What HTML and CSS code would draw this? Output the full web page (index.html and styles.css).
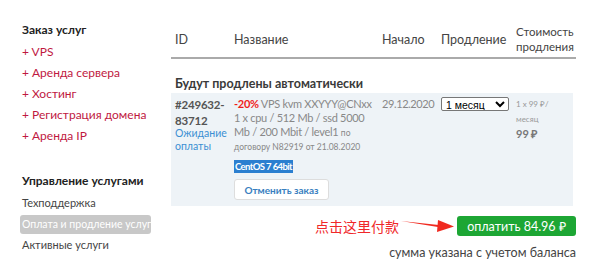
FILE: index.html
```html
<!DOCTYPE html>
<html lang="ru">
<head>
    <meta charset="UTF-8">
    <title>Оплата и продление услуг</title>
    <link rel="stylesheet" href="styles.css">
</head>
<body>
    <div class="page">
        <!-- Sidebar -->
        <aside class="sidebar">
            <h3>Заказ услуг</h3>
            <ul class="order-list">
                <li>+ VPS</li>
                <li>+ Аренда сервера</li>
                <li>+ Хостинг</li>
                <li>+ Регистрация домена</li>
                <li>+ Аренда IP</li>
            </ul>
            <h3 class="manage-title">Управление услугами</h3>
            <ul class="manage-list">
                <li>Техподдержка</li>
                <li class="active">Оплата и продление услуг</li>
                <li>Активные услуги</li>
            </ul>
        </aside>

        <!-- Main -->
        <main class="main">
            <div class="table-head">
                <div class="col-id">ID</div>
                <div class="col-name">Название</div>
                <div class="col-start">Начало</div>
                <div class="col-renew">Продление</div>
                <div class="col-cost">Стоимость продления</div>
            </div>

            <h4 class="group-title">Будут продлены автоматически</h4>

            <div class="table-row">
                <div class="col-id">
                    <div class="order-id">#249632-<br>83712</div>
                    <div class="order-status">Ожидание<br>оплаты</div>
                </div>
                <div class="col-name">
                    <div class="service">
                        <span class="line"><span class="discount">-20%</span> VPS kvm XXYYY@CNxx</span>
                        <span class="line">1 x cpu / 512 Mb / ssd 5000</span>
                        <span class="line">Mb / 200 Mbit / level1 <span class="contract">по</span></span>
                        <span class="line contract">договору N82919 от 21.08.2020</span>
                    </div>
                    <span class="os-badge">CentOS 7 64bit</span>
                    <button class="cancel-btn">Отменить заказ</button>
                </div>
                <div class="col-start date">29.12.2020</div>
                <div class="col-renew">
                    <select class="period">
                        <option>1 месяц</option>
                    </select>
                </div>
                <div class="col-cost">
                    <div class="per-month">1 x 99 ₽/<br>месяц</div>
                    <div class="total">99 ₽</div>
                </div>
            </div>

            <div class="pay-row">
                <span class="hint">点击这里付款</span>
                <svg class="arrow" width="53" height="14" viewBox="0 0 53 14">
                    <path d="M0 2 L40 6.2 L40 8.6 Z" fill="#f02a20"/>
                    <path d="M37 1 L53 7.5 L36 13 Z" fill="#f02a20"/>
                </svg>
                <button class="pay-btn">оплатить 84.96 ₽</button>
            </div>
            <div class="balance-note">сумма указана с учетом баланса</div>
        </main>
    </div>
</body>
</html>
```

FILE: styles.css
```css
body {
    margin: 0;
    font-family: Lato, "Open Sans", sans-serif;
    background: #fff;
    color: #333;
}
.page {
    display: flex;
    width: 600px;
}
.sidebar {
    width: 149px;
    padding: 22px 0 0 22px;
}
.sidebar h3 {
    margin: 0 0 3px;
    font-size: 12px;
    line-height: 16px;
    font-weight: 700;
    color: #222;
}
.sidebar ul {
    list-style: none;
    margin: 0;
    padding: 0;
}
.sidebar li {
    height: 21px;
    line-height: 21px;
}
.order-list li {
    font-size: 12px;
    color: #c0183f;
}
.manage-title {
    margin-top: 27px !important;
    margin-bottom: 3px !important;
}
.manage-list li {
    font-size: 11px;
    color: #444;
}
.manage-list li.active {
    height: 19px;
    line-height: 19px;
    margin: 2px 0 0 -2px;
    padding: 0 2px;
    width: 127px;
    background: #c8c8c8;
    color: #fff;
    border-radius: 3px;
    font-size: 10.5px;
    white-space: nowrap;
    overflow: hidden;
}
.main {
    width: 405px;
    padding-top: 24px;
}
.table-head,
.table-row {
    display: grid;
    grid-template-columns: 59px 148px 59px 75px 64px;
}
.table-head {
    align-items: center;
    font-size: 12.5px;
    color: #444;
    border-bottom: 2px solid #aaa;
    padding-bottom: 3px;
}
.table-head > div {
    padding-left: 4px;
}
.table-head .col-cost {
    font-size: 11.5px;
    line-height: 15px;
}
.group-title {
    margin: 17px 0 2px 4px;
    font-size: 12.5px;
    font-weight: 700;
    color: #3a3a3a;
    line-height: 15px;
}
.table-row {
    background: #eef3f7;
    width: 402px;
    padding: 4px 0 6px;
}
.table-row > div {
    padding-left: 4px;
}
.order-id {
    font-size: 11.5px;
    font-weight: 700;
    color: #555;
    line-height: 16px;
    letter-spacing: -0.2px;
}
.order-status {
    margin-top: -2px;
    font-size: 10.5px;
    line-height: 13px;
    color: #3b8fd3;
}
.service {
    font-size: 11px;
    color: #888;
    line-height: 14px;
    letter-spacing: -0.3px;
}
.service .line {
    display: block;
    white-space: nowrap;
}
.discount {
    color: #f01c1c;
    font-weight: 700;
}
.contract {
    font-size: 8.5px;
    letter-spacing: 0;
}
.os-badge {
    display: inline-block;
    margin-top: 4px;
    background: #2b7fd0;
    color: #fff;
    font-size: 9.5px;
    font-weight: 700;
    padding: 0 1px;
    line-height: 13px;
    letter-spacing: -0.6px;
}
.cancel-btn {
    display: block;
    margin-top: 6px;
    width: 95px;
    height: 21px;
    padding: 0;
    font-family: Lato, sans-serif;
    font-size: 10px;
    font-weight: 700;
    color: #3a7fc0;
    background: #fff;
    border: 1px solid #ddd;
    border-radius: 3px;
}
.date {
    font-size: 11px;
    color: #888;
    line-height: 14px;
    letter-spacing: -0.4px;
}
.period {
    display: block;
    width: 68px;
    height: 14px;
    font-size: 10.5px;
    font-family: "Liberation Sans", Arial, sans-serif;
    padding: 0;
    border: 1px solid #777;
    border-radius: 2px;
    background: #fff;
}
.per-month {
    font-size: 8px;
    color: #999;
    line-height: 15px;
}
.total {
    font-size: 11px;
    font-weight: 700;
    color: #777;
    line-height: 13px;
}
.pay-row {
    display: flex;
    align-items: center;
    justify-content: flex-end;
    margin-top: 10px;
    width: 405px;
}
.hint {
    font-family: "Noto Sans CJK SC", sans-serif;
    font-size: 14px;
    line-height: 18px;
    color: #f0282a;
    margin-right: 2px;
}
.arrow {
    margin-right: 3px;
}
.pay-btn {
    background: #1da634;
    color: #fff;
    border: none;
    border-radius: 3px;
    font-family: Lato, sans-serif;
    font-size: 12.5px;
    padding: 0;
    height: 20px;
    width: 119px;
}
.balance-note {
    margin-top: 9px;
    text-align: right;
    width: 405px;
    font-size: 12.5px;
    line-height: 15px;
    color: #444;
}
```
